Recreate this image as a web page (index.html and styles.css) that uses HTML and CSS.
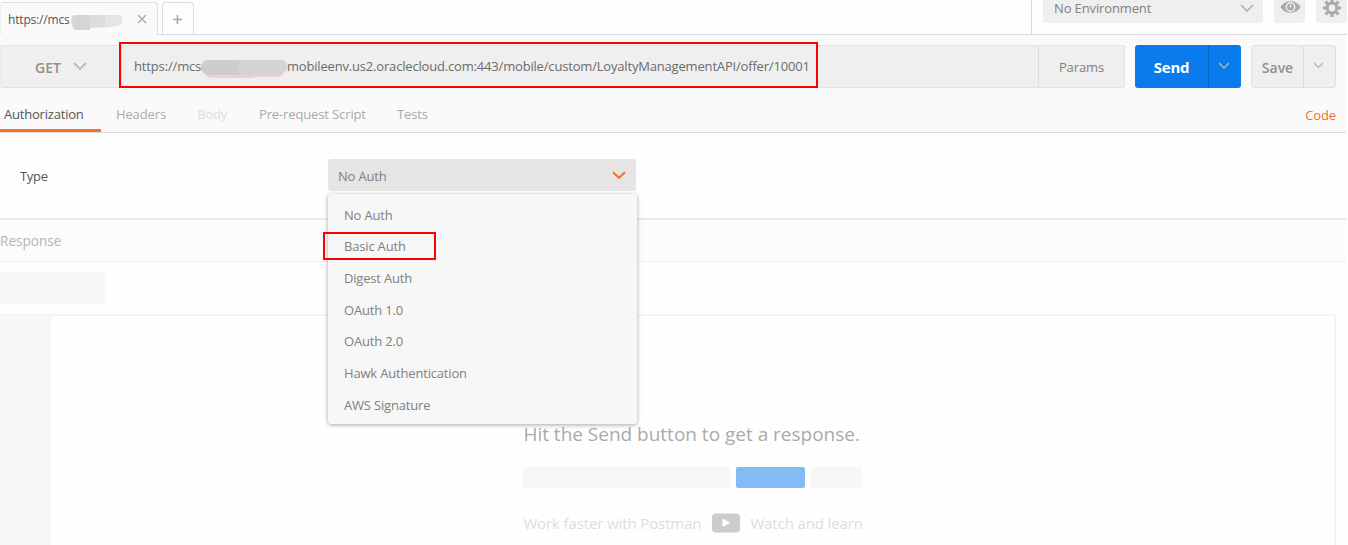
FILE: index.html
```html
<!DOCTYPE html>
<html lang="en">
<head>
<meta charset="utf-8">
<title>Postman</title>
<link rel="stylesheet" href="styles.css">
</head>
<body>
<div class="app">
  <header class="topbar">
    <div class="tab active">
      <span class="tab-title">https://mcs</span>
      <svg class="tab-mask" width="54" height="17" viewBox="0 0 54 17"><path d="M3 1H51Q54 7 50 11L40 13 20 14 18 16H5Q-2 8 3 1Z" fill="#dcdcdc"/><path d="M5 1H20V16H5Q-1 8 5 1Z" fill="#d5d5d5"/><path d="M35 1H51Q54 7 50 11L35 13Z" fill="#e5e5e5"/></svg>
      <svg class="tab-close" width="10" height="10" viewBox="0 0 10 10"><path d="M1 1l8 8M9 1l-8 8" stroke="#aaa" stroke-width="1.4"/></svg>
    </div>
    <div class="tab add"><svg width="9" height="9" viewBox="0 0 9 9"><path d="M4.5 0v9M0 4.5h9" stroke="#aaa" stroke-width="1.6"/></svg></div>
    <div class="env">
      <div class="env-select"><span>No Environment</span>
        <svg width="14" height="9" viewBox="0 0 14 9"><path d="M1 1l6 6 6-6" fill="none" stroke="#b3b3b3" stroke-width="1.7"/></svg>
      </div>
      <div class="icon-btn"><svg class="eye" width="21" height="14" viewBox="0 0 21 14"><path d="M.3 7C5-.8 16-.8 20.700 7C16 14.800 5 14.800.3 7Z" fill="#aaa"/><circle cx="10.500" cy="7" r="4.900" fill="#efefef"/><circle cx="10.500" cy="7" r="3.500" fill="#aaa"/><path d="M10.500 4.500V7.500" stroke="#efefef" stroke-width="1.400"/></svg></div>
      <div class="icon-btn gear-btn"><svg width="20" height="20" viewBox="-10 -10 20 20"><g stroke="#aaa" stroke-width="3.2"><path d="M0-9V9M-9 0H9M-6.400-6.400L6.400 6.400M-6.400 6.400L6.400-6.400"/></g><circle r="6.300" fill="#aaa"/><circle r="3.400" fill="#efefef"/></svg></div>
    </div>
  </header>

  <section class="request">
    <div class="url-row">
      <div class="url-group">
        <div class="method"><span>GET</span><svg width="14" height="9" viewBox="0 0 14 9"><path d="M1 1l6 6 6-6" fill="none" stroke="#b3b3b3" stroke-width="1.7"/></svg></div>
        <div class="url"><span class="url-host">https://mcs</span><svg class="url-mask" width="88" height="18" viewBox="0 0 88 18"><path d="M5 14H83L80 17H55L53 18H10Z" fill="#f8cccc"/><path d="M6 0H84Q92 8 82 14L78 15H7Q-5 8 6 0Z" fill="#d4d4d4"/><path d="M6 0H39V15H7Q-5 8 6 0Z" fill="#cdcdcd"/></svg><span class="url-path">mobileenv.us2.oraclecloud.com:443/mobile/custom/LoyaltyManagementAPI/offer/10001</span></div>
        <div class="params">Params</div>
      </div>
      <div class="send"><span>Send</span><i class="caret"><svg width="12" height="8" viewBox="0 0 12 8"><path d="M1 1l5 5 5-5" fill="none" stroke="#b5b5b5" stroke-width="1.5"/></svg></i></div>
      <div class="save"><span>Save</span><i class="caret"><svg width="11" height="7" viewBox="0 0 11 7"><path d="M1 1l4.500 4.500L10 1" fill="none" stroke="#b8b8b8" stroke-width="1.4"/></svg></i></div>
    </div>
    <nav class="subtabs">
      <span class="subtab current">Authorization</span>
      <span class="subtab headers">Headers</span>
      <span class="subtab disabled">Body</span>
      <span class="subtab prereq">Pre-request Script</span>
      <span class="subtab tests">Tests</span>
      <span class="code">Code</span>
    </nav>
  </section>

  <section class="auth">
    <label class="auth-label">Type</label>
    <div class="auth-select"><span>No Auth</span><svg width="14" height="9" viewBox="0 0 14 9"><path d="M1 1.200l6 5.600 6-5.600" fill="none" stroke="#f47023" stroke-width="2"/></svg>
      <ul class="menu">
        <li>No Auth</li><li>Basic Auth</li><li>Digest Auth</li><li>OAuth 1.0</li><li>OAuth 2.0</li><li class="hawk">Hawk Authentication</li><li>AWS Signature</li>
      </ul>
    </div>
  </section>

  <div class="response-head">Response</div>
  <section class="response">
    <div class="placeholder-tab"></div>
    <div class="editor">
      <div class="gutter"></div>
      <div class="empty">
        <p class="hint">Hit the Send button to get a response.</p>
        <div class="bars"><b class="bar long"></b><b class="bar blue"></b><b class="bar short"></b></div>
        <div class="learn"><span class="faster">Work faster with Postman</span><svg width="28" height="20" viewBox="0 0 28 20"><rect width="28" height="19" y=".5" rx="4" fill="#ccc"/><path d="M10.500 5.500v8.500l8-4.200z" fill="#fff"/></svg><span class="watch">Watch and learn</span></div>
      </div>
    </div>
  </section>
  <div class="mark mark-url"></div>
  <div class="mark mark-basic"></div>
</div>
</body>
</html>
```
FILE: styles.css
```css
* { box-sizing: border-box; }
body { margin: 0; background: #fefefe; font-family: "Open Sans", sans-serif; font-size: 13px; color: #808080; }
svg { display: block; flex: none; }
span { white-space: nowrap; }
.app { position: relative; width: 1348px; height: 545px; overflow: hidden; }

.topbar { display: flex; width: 1347px; height: 35px; border-bottom: 1px solid #dbdbdb; }
.tab { margin-top: 2px; height: 32px; border: 1px solid #dedede; border-bottom: 0; border-radius: 3px 3px 0 0; display: flex; align-items: center; }
.tab.active { width: 158px; height: 33px; padding-left: 7px; background: #fafafa; color: #555; font-size: 12px; letter-spacing: -.17px; border-left-color: #eee; }
.tab-title { width: 62px; }
.tab-mask { margin-top: 6px; }
.tab-close { margin-left: 13px; }
.tab.add { width: 32px; margin-left: 4px; justify-content: center; }
.tab.add svg { margin-right: 2px; margin-top: 1px; }
.env { margin-left: auto; width: 316px; border-left: 1px solid #dbdbdb; display: flex; padding-left: 11px; gap: 11px; }
.env-select { width: 221px; height: 23px; background: #efefef; border-radius: 0 0 3px 3px; display: flex; align-items: center; justify-content: space-between; padding: 0 9px 7px 11px; letter-spacing: -.13px; }
.icon-btn { width: 31px; height: 23px; background: #efefef; border-radius: 0 0 3px 3px; display: flex; justify-content: center; }
.eye { margin-left: 1px; }
.gear-btn { align-items: flex-start; }
.gear-btn svg { margin-top: -2px; }

.request { width: 1346px; height: 98px; background: #fafafa; border-bottom: 1px solid #dbdbdb; padding-top: 10px; }
.url-row { display: flex; height: 43px; }
.url-group { display: flex; width: 1125px; background: #efefef; border: 1px solid #e3e3e3; border-left-color: #eaeaea; border-radius: 3px; }
.method { width: 121px; border-right: 1px solid #e0e0e0; display: flex; align-items: center; padding-left: 34px; font-size: 14px; font-weight: 600; color: #909090; }
.method span { width: 38px; padding-top: 1px; }
.url { flex: 1; display: flex; align-items: center; padding-left: 12px; color: #6b6b6b; }
.url span { position: relative; top: -1px; letter-spacing: -.18px; }
.url-host { width: 66px; }
.url .url-host { letter-spacing: -.15px; }
.url-mask { margin: 5px 0 0; }
.url .url-path { margin-left: -1px; }
.params { width: 86px; border-left: 1px solid #ddd; text-align: center; line-height: 43px; letter-spacing: -.1px; }
.send { margin-left: 10px; width: 106px; height: 43px; background: #097bed; border-radius: 3px; color: #fff; font-size: 15px; letter-spacing: -.2px; font-weight: 700; display: flex; }
.send span { width: 73px; text-align: center; line-height: 44px; }
.caret { flex: 1; display: flex; align-items: center; justify-content: center; padding-bottom: 2px; border-left: 1px solid #0867c6; }
.send .caret svg { margin-right: 2px; }
.save { margin-left: 10px; width: 85px; border: 1px solid #e0e0e0; border-radius: 3px; background: #efefef; display: flex; font-size: 14px; font-weight: 600; color: #909090; }
.save span { width: 51px; text-align: center; line-height: 43px; }
.save .caret { border-left-color: #ddd; }
.save .caret svg { margin-right: 3px; }
.subtabs { display: flex; height: 44px; color: #aaa; line-height: 52px; letter-spacing: -.13px; }
.subtab.current { width: 101px; padding-left: 4px; color: #555; letter-spacing: -.2px; border-bottom: 3px solid #f47023; }
.headers { width: 81px; padding-left: 15px; }
.subtab.disabled { width: 77px; padding-left: 15px; color: #ddd; }
.prereq { width: 138px; }
.code { margin-left: auto; margin-right: 10px; padding-top: 1px; color: #f47023; }

.auth { width: 1346px; height: 85px; display: flex; }
.auth-label { width: 328px; padding: 34px 0 0 20px; color: #555; letter-spacing: -.3px; }
.auth-select { position: relative; margin-top: 26px; width: 308px; height: 32px; background: #e5e5e5; border-radius: 3px; display: flex; align-items: center; justify-content: space-between; padding: 1px 10px 0; letter-spacing: -.18px; }
.menu { position: absolute; left: 0; top: 35px; width: 309px; height: 230px; margin: 0; padding: 5.7px 16px; list-style: none; background: #f7f7f7; border-radius: 3px; box-shadow: 0 1px 4px rgba(0,0,0,.35); z-index: 2; }
.menu li { height: 31.7px; line-height: 31.7px; }

.response-head { width: 1346px; height: 44px; border-top: 2px solid #e9e9e9; border-bottom: 1px solid #eee; background: #fcfcfc; color: #b5b5b5; line-height: 42px; font-size: 13.6px; }
.response { padding-top: 10px; }
.placeholder-tab { width: 105px; height: 32px; background: #f7f7f7; border-radius: 3px; }
.editor { margin-top: 10px; width: 1336px; height: 240px; border: 2px solid #f3f3f3; border-left-width: 1px; border-radius: 3px; display: flex; }
.gutter { width: 50px; background: #f7f7f7; }
.empty { margin-left: 472.4px; width: 340px; }
.hint { margin: 105px 0 0; height: 27px; line-height: 27px; font-size: 19px; letter-spacing: -.01px; color: #aaa; white-space: nowrap; }
.bars { margin-top: 19px; display: flex; height: 21px; gap: 6px; }
.bar { border-radius: 2px; background: #f7f7f7; }
.long { width: 207px; }
.blue { width: 69px; background: #84bbf5; }
.short { width: 51px; }
.learn { margin-top: 25px; height: 20px; display: flex; align-items: center; font-size: 15px; letter-spacing: -.12px; color: #ddd; }
.faster { width: 189px; }
.watch { margin-left: 10px; }
.learn span { line-height: 20px; }

.mark { position: absolute; border: 2px solid #f00; z-index: 3; }
.mark-url { left: 119px; top: 42px; width: 699px; height: 46px; }
.mark-basic { left: 323px; top: 232px; width: 113px; height: 28px; }
```
